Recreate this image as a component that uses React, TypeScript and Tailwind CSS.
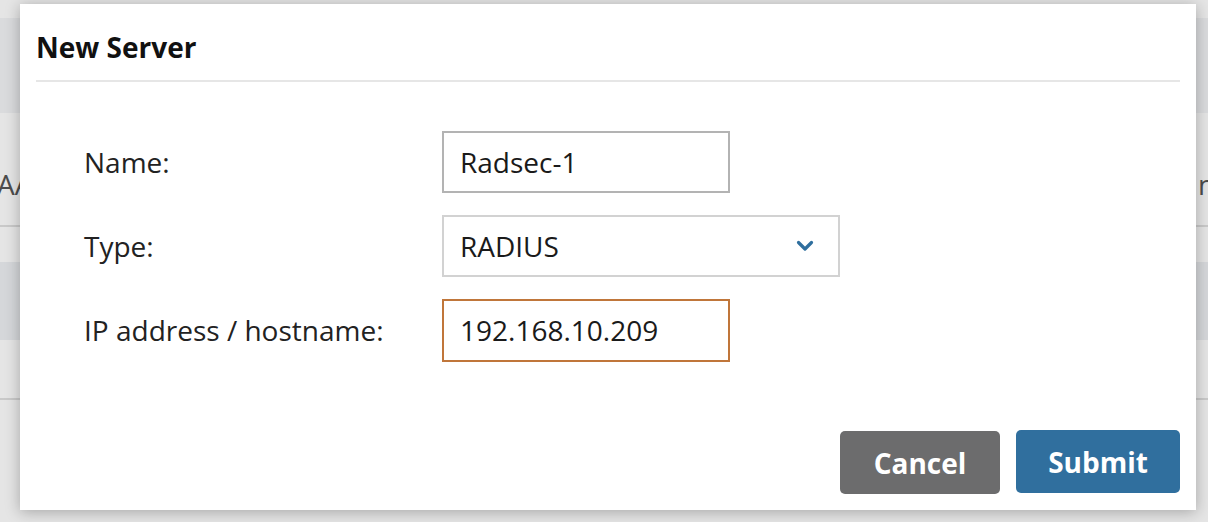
import { ReactNode } from "react";

const font = { fontFamily: '"Open Sans", "Noto Sans", sans-serif' };

const FieldRow = ({ label, children }: { label: string; children: ReactNode }) => (
  <div className="flex items-center h-[62px]">
    <div className="w-[358px] text-[28px] leading-[38px] text-[#222]">{label}</div>
    {children}
  </div>
);

const Chevron = () => (
  <svg width="18" height="12" viewBox="0 0 18 12" fill="none">
    <path d="M2.5 2.5 L9 9 L15.5 2.5" stroke="#2f6f9e" strokeWidth="3.2" strokeLinecap="round" strokeLinejoin="round" />
  </svg>
);

export default function App() {
  return (
    <div className="relative w-[1208px] h-[522px] overflow-hidden bg-white" style={font}>
      {/* page behind the dialog */}
      <div className="flex flex-col">
        <div className="h-[18px]" />
        <div className="h-[95px] bg-[#f3f4f6]" />
        <div className="h-[114px] border-b-2 border-[#e0e0e0] flex items-center justify-between">
          <span className="-ml-[3px] mt-[30px] text-[28px] text-[#555]">AAA</span>
          <span className="w-[10px] overflow-hidden mt-[30px] text-[28px] text-[#555]">nam</span>
        </div>
        <div className="h-[35px]" />
        <div className="h-[78px] bg-[#eef0f3]" />
        <div className="h-[60px] border-b-2 border-[#e0e0e0]" />
      </div>
      <div className="absolute inset-0 bg-black/10" />

      {/* dialog */}
      <div className="absolute left-[20px] top-[4px] w-[1176px] h-[506px] bg-white px-4 shadow-[0_2px_14px_rgba(0,0,0,0.28)]">
        <div className="pt-[24px] pb-[14px] border-b-2 border-[#e6e6e6]">
          <h2 className="text-[28px] leading-[38px] font-bold text-[#111]">New Server</h2>
        </div>

        <div className="mt-[49px] pl-[48px] flex flex-col gap-[22px]">
          <FieldRow label="Name:">
            <div className="w-[288px] h-[62px] border-2 border-[#b3b3b3] px-[16px] flex items-center text-[28px] text-[#1a1a1a]">
              Radsec-1
            </div>
          </FieldRow>
          <FieldRow label="Type:">
            <div className="w-[398px] h-[62px] border-2 border-[#d2d2d2] pl-[16px] pr-[24px] flex items-center justify-between text-[28px] text-[#1a1a1a]">
              <span>RADIUS</span>
              <Chevron />
            </div>
          </FieldRow>
          <FieldRow label="IP address / hostname:">
            <div className="w-[288px] h-[63px] border-2 border-[#c0763a] px-[16px] flex items-center text-[28px] text-[#1a1a1a]">
              192.168.10.209
            </div>
          </FieldRow>
        </div>

        <div className="mt-[69px] flex justify-end gap-4">
          <button className="w-[160px] h-[63px] mt-[1px] rounded-[5px] bg-[#6c6c6d] text-white text-[28px] font-bold">
            Cancel
          </button>
          <button className="w-[164px] h-[63px] rounded-[5px] bg-[#306f9e] text-white text-[28px] font-bold">
            Submit
          </button>
        </div>
      </div>
    </div>
  );
}
